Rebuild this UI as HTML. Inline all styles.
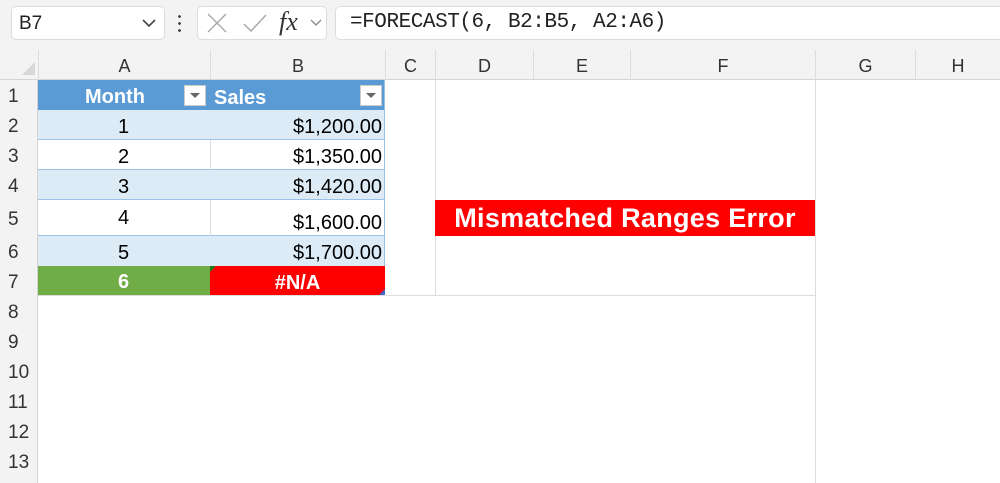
<!DOCTYPE html><html><head><style>
body{margin:0;width:1000px;height:483px;overflow:hidden;background:#fff;font-family:"Liberation Sans",sans-serif;position:relative}
.a{position:absolute;box-sizing:border-box}
.tb{left:0;top:0;width:1000px;height:50px;background:#f3f3f3}
.box{background:#fff;border:1px solid #dcdcdc;border-radius:5px}
.ch{top:50px;height:30px;background:#f3f3f3;border-bottom:1px solid #d4d4d4;font-size:18px;color:#333;text-align:center;line-height:33px}
.rh{left:0;width:38px;background:#f3f3f3;font-size:18px;color:#333;padding-left:8px;border-right:1px solid #d4d4d4}
.c{font-size:20px;line-height:30px}
</style></head><body>
<div class="a tb"></div>
<div class="a box" style="left:11px;top:6px;width:154px;height:34px"></div>
<div class="a" style="left:19px;top:13px;font-size:19px;color:#222">B7</div>
<svg class="a" style="left:141px;top:18px" width="16" height="10"><path d="M2 2 L8 8 L14 2" fill="none" stroke="#444" stroke-width="1.6"/></svg>
<div class="a" style="left:178px;top:13px;width:3px;height:20px;background:radial-gradient(circle,#444 1.3px,transparent 1.5px) 0 0/3px 7px"></div>
<div class="a box" style="left:197px;top:6px;width:130px;height:34px"></div>
<svg class="a" style="left:205px;top:12px" width="24" height="22"><path d="M3 2 L21 20 M21 2 L3 20" stroke="#aaa" stroke-width="1.5"/></svg>
<svg class="a" style="left:242px;top:12px" width="26" height="22"><path d="M2 12 L9 19 L24 3" fill="none" stroke="#aaa" stroke-width="1.5"/></svg>
<div class="a" style="left:279px;top:7px;font-size:26px;font-style:italic;font-family:'Liberation Serif',serif;color:#333">fx</div>
<svg class="a" style="left:309px;top:18px" width="14" height="9"><path d="M2 2 L7 7 L12 2" fill="none" stroke="#888" stroke-width="1.3"/></svg>
<div class="a box" style="left:335px;top:6px;width:680px;height:34px"></div>
<div class="a" style="left:350px;top:11px;font-size:21px;color:#222;font-family:'Liberation Mono',monospace;letter-spacing:-0.45px">=FORECAST(6, B2:B5, A2:A6)</div>
<div class="a ch" style="left:0;width:38px"></div>
<div class="a" style="left:22px;top:62px;width:0;height:0;border-left:13px solid transparent;border-bottom:13px solid #d8d8d8"></div>
<div class="a ch" style="left:38px;width:172px;border-left:1px solid #ddd">A</div>
<div class="a ch" style="left:210px;width:175px;border-left:1px solid #ddd">B</div>
<div class="a ch" style="left:385px;width:50px;border-left:1px solid #ddd">C</div>
<div class="a ch" style="left:435px;width:98px;border-left:1px solid #ddd">D</div>
<div class="a ch" style="left:533px;width:97px;border-left:1px solid #ddd">E</div>
<div class="a ch" style="left:630px;width:185px;border-left:1px solid #ddd">F</div>
<div class="a ch" style="left:815px;width:100px;border-left:1px solid #ddd">G</div>
<div class="a ch" style="left:915px;width:85px;border-left:1px solid #ddd">H</div>
<div class="a rh" style="top:80px;height:403px"></div>
<div class="a" style="left:8px;top:82px;font-size:19px;color:#333;line-height:30px">1<br>2<br>3<br>4<br><span style="line-height:36px">5</span><br>6<br>7<br>8<br>9<br>10<br>11<br>12<br>13</div>
<div class="a" style="left:815px;top:80px;width:1px;height:403px;background:#ddd"></div>
<div class="a" style="left:435px;top:80px;width:1px;height:215px;background:#ddd"></div>
<div class="a" style="left:38px;top:295px;width:777px;height:1px;background:#ddd"></div>
<div class="a" style="left:38px;top:80px;width:347px;height:30px;background:#5b9bd5"></div>
<div class="a c" style="left:85px;top:82px;color:#fff;font-weight:bold">Month</div>
<div class="a c" style="left:214px;top:83px;color:#fff;font-weight:bold">Sales</div>
<div class="a" style="left:184px;top:85px;width:22px;height:21px;background:#fff;border:1px solid #ccc"></div>
<div class="a" style="left:190px;top:93px;border-left:5px solid transparent;border-right:5px solid transparent;border-top:5px solid #666"></div>
<div class="a" style="left:360px;top:85px;width:22px;height:21px;background:#fff;border:1px solid #ccc"></div>
<div class="a" style="left:366px;top:93px;border-left:5px solid transparent;border-right:5px solid transparent;border-top:5px solid #666"></div>
<div class="a" style="left:38px;top:110px;width:347px;height:30px;background:#ddebf7;border-bottom:1px solid #9bc2e6"></div>
<div class="a" style="left:38px;top:140px;width:347px;height:30px;background:#fff;border-bottom:1px solid #9bc2e6"></div>
<div class="a" style="left:38px;top:170px;width:347px;height:30px;background:#ddebf7;border-bottom:1px solid #9bc2e6"></div>
<div class="a" style="left:38px;top:200px;width:347px;height:36px;background:#fff;border-bottom:1px solid #9bc2e6"></div>
<div class="a" style="left:38px;top:236px;width:347px;height:30px;background:#ddebf7"></div>
<div class="a" style="left:210px;top:140px;width:1px;height:30px;background:#ddd"></div>
<div class="a" style="left:210px;top:200px;width:1px;height:36px;background:#ddd"></div>
<div class="a" style="left:384px;top:80px;width:1px;height:186px;background:#9bc2e6"></div>
<div class="a c" style="left:118px;top:112px">1</div><div class="a c" style="left:230px;top:112px;width:152px;text-align:right">$1,200.00</div>
<div class="a c" style="left:118px;top:142px">2</div><div class="a c" style="left:230px;top:142px;width:152px;text-align:right">$1,350.00</div>
<div class="a c" style="left:118px;top:172px">3</div><div class="a c" style="left:230px;top:172px;width:152px;text-align:right">$1,420.00</div>
<div class="a c" style="left:118px;top:203px">4</div><div class="a c" style="left:230px;top:208px;width:152px;text-align:right">$1,600.00</div>
<div class="a c" style="left:118px;top:238px">5</div><div class="a c" style="left:230px;top:238px;width:152px;text-align:right">$1,700.00</div>
<div class="a" style="left:38px;top:266px;width:172px;height:29px;background:#70ad47"></div>
<div class="a" style="left:210px;top:266px;width:175px;height:29px;background:#ff0000"></div>
<div class="a" style="left:210px;top:266px;border-right:6px solid transparent;border-top:6px solid #1e7a1e"></div>
<div class="a" style="left:379px;top:289px;border-left:6px solid transparent;border-bottom:6px solid #4466cc"></div>
<div class="a c" style="left:118px;top:267px;color:#fff;font-weight:bold">6</div>
<div class="a c" style="left:210px;top:268px;width:175px;text-align:center;color:#fff;font-weight:bold">#N/A</div>
<div class="a" style="left:435px;top:200px;width:380px;height:36px;background:#ff0000;color:#fff;font-weight:bold;font-size:27px;line-height:37px;text-align:center;letter-spacing:0.3px">Mismatched Ranges Error</div>
</body></html>
